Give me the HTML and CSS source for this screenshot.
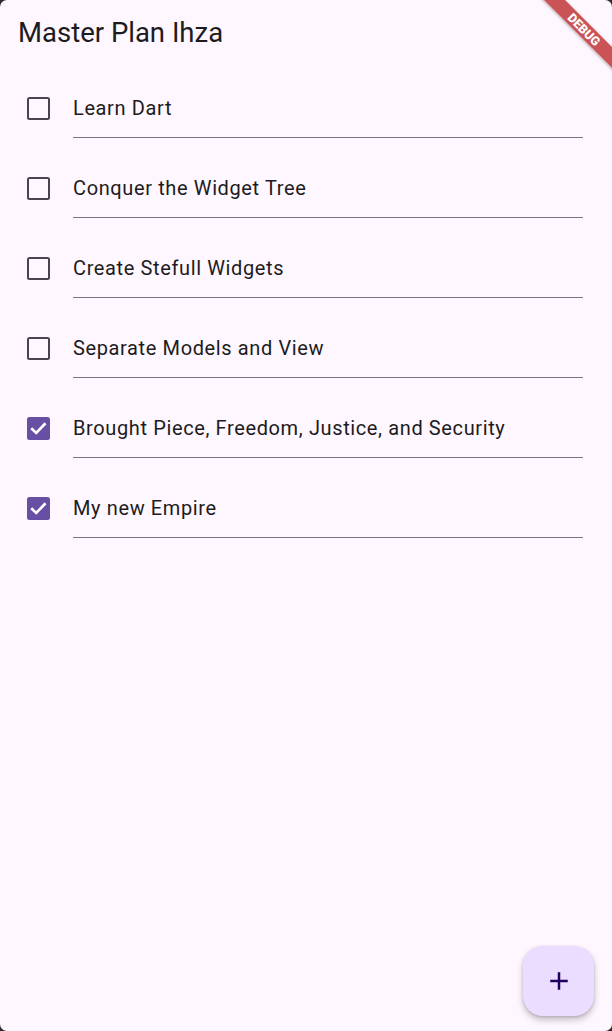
FILE: index.html
```html
<!DOCTYPE html>
<html>
<head>
<meta charset="utf-8">
<link rel="stylesheet" href="styles.css">
</head>
<body>
<div class="screen">
  <header class="appbar">Master Plan Ihza</header>
  <ul class="plan">
    <li class="task">
      <span class="box"></span>
      <div class="field">Learn Dart</div>
    </li>
    <li class="task">
      <span class="box"></span>
      <div class="field">Conquer the Widget Tree</div>
    </li>
    <li class="task">
      <span class="box"></span>
      <div class="field">Create Stefull Widgets</div>
    </li>
    <li class="task">
      <span class="box"></span>
      <div class="field">Separate Models and View</div>
    </li>
    <li class="task">
      <span class="box checked"><svg viewBox="0 0 18 18" width="22.5" height="22.5"><polyline points="3.4,9 7.4,12.8 14.8,5" fill="none" stroke="#fff" stroke-width="2.1"/></svg></span>
      <div class="field">Brought Piece, Freedom, Justice, and Security</div>
    </li>
    <li class="task">
      <span class="box checked"><svg viewBox="0 0 18 18" width="22.5" height="22.5"><polyline points="3.4,9 7.4,12.8 14.8,5" fill="none" stroke="#fff" stroke-width="2.1"/></svg></span>
      <div class="field">My new Empire</div>
    </li>
  </ul>
  <button class="fab" aria-label="Add"><svg viewBox="0 0 24 24" width="30" height="30"><path d="M19 13h-6v6h-2v-6H5v-2h6V5h2v6h6v2z" fill="#21005D"/></svg></button>
  <div class="banner">DEBUG</div>
</div>
</body>
</html>
```

FILE: styles.css
```css
html, body {
  margin: 0;
  padding: 0;
  background: #2a2a2a;
}
.screen {
  position: relative;
  width: 612px;
  height: 1031px;
  background: #FEF7FF;
  border-radius: 7px;
  overflow: hidden;
  font-family: Roboto, "Liberation Sans", sans-serif;
  color: #1D1B20;
}
.appbar {
  height: 66px;
  line-height: 66px;
  padding-left: 18px;
  font-size: 27.5px;
  font-weight: 400;
}
.plan {
  list-style: none;
  margin: 0;
  padding: 0;
}
.task {
  height: 80px;
  display: flex;
  align-items: flex-start;
  padding-left: 27px;
}
.box {
  box-sizing: border-box;
  width: 22.5px;
  height: 22.5px;
  margin-top: 31.3px;
  margin-right: 23.5px;
  border: 2.5px solid #49454F;
  border-radius: 2.5px;
  display: block;
  position: relative;
}
.box.checked {
  border: none;
  background: #6750A4;
}
.box svg {
  display: block;
}
.field {
  width: 510px;
  padding-top: 30.2px;
  padding-bottom: 17.1px;
  line-height: 24px;
  font-size: 20px;
  letter-spacing: 0.62px;
  border-bottom: 1.25px solid #79747E;
}
.fab {
  position: absolute;
  right: 18px;
  bottom: 15px;
  width: 71px;
  height: 70px;
  border: none;
  border-radius: 20px;
  background: #EADDFF;
  box-shadow: 0 4px 7px rgba(0, 0, 0, 0.22), 0 1px 3px rgba(0, 0, 0, 0.15);
  display: flex;
  align-items: center;
  justify-content: center;
  padding: 0;
}
.fab svg {
  display: block;
}
.banner {
  position: absolute;
  left: 524px;
  top: 21.5px;
  width: 120px;
  height: 15px;
  line-height: 15px;
  transform: rotate(45deg);
  background: rgba(183, 28, 28, 0.75);
  color: #fff;
  font-family: Roboto, "Liberation Sans", sans-serif;
  font-size: 12.5px;
  font-weight: 900;
  text-align: center;
  box-shadow: 0 1px 3px rgba(0, 0, 0, 0.3);
}
```
